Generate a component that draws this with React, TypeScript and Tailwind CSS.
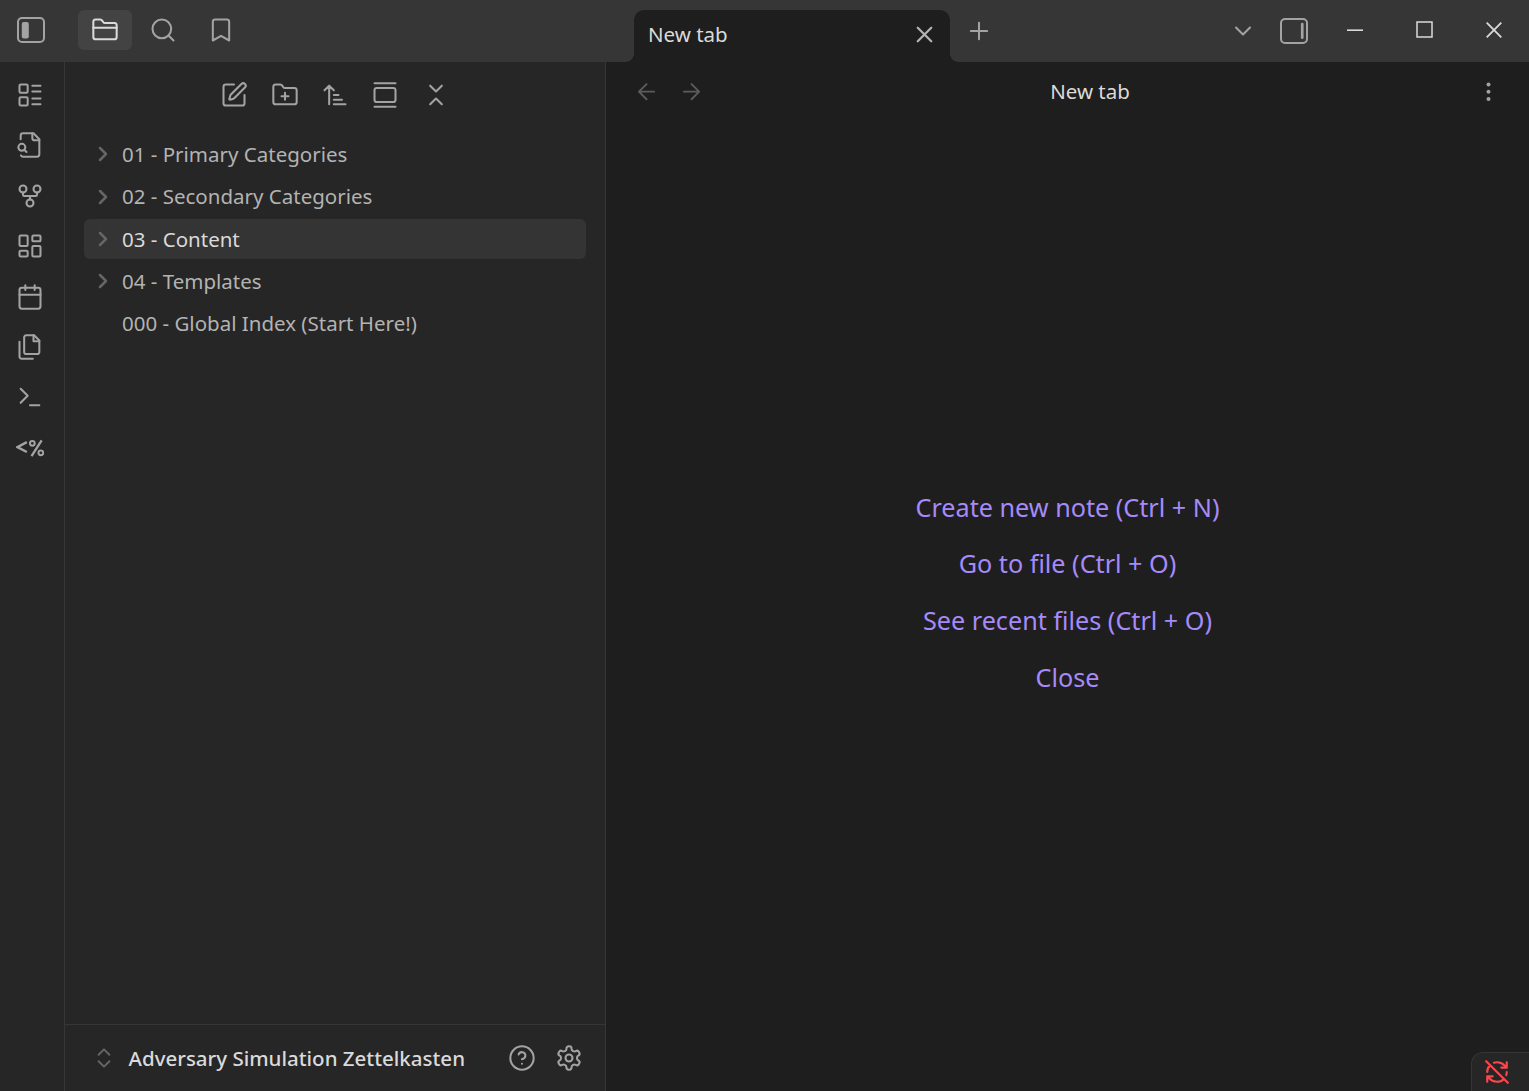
import type { ReactNode } from "react";

type IconProps = { children: ReactNode; className?: string; stroke?: number };

function Icon({ children, className = "size-7", stroke = 1.75 }: IconProps) {
  return (
    <svg
      viewBox="0 0 24 24"
      fill="none"
      stroke="currentColor"
      strokeWidth={stroke}
      strokeLinecap="round"
      strokeLinejoin="round"
      className={`shrink-0 ${className}`}
    >
      {children}
    </svg>
  );
}

const folder =
  "M20 20a2 2 0 0 0 2-2V8a2 2 0 0 0-2-2h-7.93a2 2 0 0 1-1.66-.9l-.82-1.2A2 2 0 0 0 7.93 3H4a2 2 0 0 0-2 2v13c0 1.1.9 2 2 2Z";

const ribbonIcons: ReactNode[] = [
  <>
    <rect x="3" y="3" width="7" height="7" rx="1" />
    <rect x="3" y="14" width="7" height="7" rx="1" />
    <path d="M14 4h7M14 9h7M14 15h7M14 20h7" />
  </>,
  <>
    <path d="M14 2v4a2 2 0 0 0 2 2h4" />
    <path d="M4.268 21a2 2 0 0 0 1.727 1H18a2 2 0 0 0 2-2V7l-5-5H6a2 2 0 0 0-2 2v3" />
    <path d="m9 18-1.5-1.5" />
    <circle cx="5" cy="14" r="3" />
  </>,
  <>
    <circle cx="12" cy="18" r="3" />
    <circle cx="6" cy="6" r="3" />
    <circle cx="18" cy="6" r="3" />
    <path d="M18 9v2c0 .6-.4 1-1 1H7c-.6 0-1-.4-1-1V9M12 12v3" />
  </>,
  <>
    <rect x="3" y="3" width="7" height="9" rx="1" />
    <rect x="14" y="3" width="7" height="5" rx="1" />
    <rect x="14" y="12" width="7" height="9" rx="1" />
    <rect x="3" y="16" width="7" height="5" rx="1" />
  </>,
  <>
    <path d="M8 2v4M16 2v4M3 10h18" />
    <rect x="3" y="4" width="18" height="18" rx="2" />
  </>,
  <>
    <path d="M15.5 2H8.6c-.4 0-.8.2-1.1.5-.3.3-.5.7-.5 1.1v12.8c0 .4.2.8.5 1.1.3.3.7.5 1.1.5h9.8c.4 0 .8-.2 1.1-.5.3-.3.5-.7.5-1.1V6.5L15.5 2z" />
    <path d="M3 7.6v12.8c0 .4.2.8.5 1.1.3.3.7.5 1.1.5h9.8M15 2v5h5" />
  </>,
  <path d="m4 17 6-6-6-6M12 19h8" />,
  <g strokeLinecap="butt" strokeLinejoin="miter">
    <path d="M9.3 7 1.2 11.2l8.1 4.2" strokeWidth="2.1" />
    <path d="M22 5.4 13.3 18.9" strokeWidth="2" />
    <circle cx="14" cy="8" r="2.05" strokeWidth="1.7" />
    <circle cx="21.3" cy="16.1" r="2.05" strokeWidth="1.7" />
  </g>,
];

const toolbarIcons: ReactNode[] = [
  <>
    <path d="M12 3H5a2 2 0 0 0-2 2v14a2 2 0 0 0 2 2h14a2 2 0 0 0 2-2v-7" />
    <path d="M18.375 2.625a1 1 0 0 1 3 3l-9.013 9.014a2 2 0 0 1-.853.505l-2.873.84a.5.5 0 0 1-.62-.62l.84-2.873a2 2 0 0 1 .506-.852z" />
  </>,
  <>
    <path d={folder} />
    <path d="M12 10v6M9 13h6" />
  </>,
  <path d="m3 8 4-4 4 4M7 4v16M11 12h4M11 16h7M11 20h10" />,
  <>
    <path d="M3 2h18M3 22h18" />
    <rect x="3" y="6" width="18" height="12" rx="2" />
  </>,
  <path d="m7 20 5-5 5 5M7 4l5 5 5-5" />,
];

const files = [
  { name: "01 - Primary Categories", folder: true },
  { name: "02 - Secondary Categories", folder: true },
  { name: "03 - Content", folder: true, active: true },
  { name: "04 - Templates", folder: true },
  { name: "000 - Global Index (Start Here!)", folder: false },
];

const actions = [
  "Create new note (Ctrl + N)",
  "Go to file (Ctrl + O)",
  "See recent files (Ctrl + O)",
  "Close",
];

function TitleBar() {
  return (
    <header className="flex h-[62px] shrink-0 bg-[#363636] text-[#a3a3a3]">
      <div className="flex h-[60px] w-[634px] items-center">
        <svg viewBox="0 0 28 26" className="ml-[17px] h-[26px] w-7" fill="none" stroke="currentColor">
          <rect x="1" y="1" width="26" height="24" rx="4" strokeWidth="2" />
          <rect x="4.8" y="5" width="7" height="16.6" rx="2" fill="currentColor" stroke="none" />
        </svg>
        <div className="ml-[33px] flex h-10 w-[54px] items-center justify-center rounded-md bg-[#434343] text-[#dadada]">
          <Icon>
            <path d={folder} />
            <path d="M2 10h20" />
          </Icon>
        </div>
        <Icon className="ml-[17.3px] size-7">
          <circle cx="11" cy="11" r="8" />
          <path d="m21 21-4.3-4.3" />
        </Icon>
        <Icon className="ml-[30px] size-7">
          <path d="m19 21-7-4-7 4V5a2 2 0 0 1 2-2h10a2 2 0 0 1 2 2v16z" />
        </Icon>
      </div>
      <div className="relative mt-2.5 flex h-[52px] w-[316px] items-center justify-between rounded-t-[10px] bg-[#1e1e1e] pr-3 pb-[3px] pl-3.5 text-[#dadada]">
        <div className="absolute bottom-0 -left-2 size-2 bg-[radial-gradient(circle_at_0_0,#363636_7.5px,#1e1e1e_8px)]" />
        <div className="absolute -right-2 bottom-0 size-2 bg-[radial-gradient(circle_at_100%_0,#363636_7.5px,#1e1e1e_8px)]" />
        <span>New tab</span>
        <Icon className="size-[27px] text-[#b3b3b3]" stroke={2}>
          <path d="M18 6 6 18M6 6l12 12" />
        </Icon>
      </div>
      <Icon className="mt-[17.3px] ml-[15.3px] size-7">
        <path d="M5 12h14M12 5v14" />
      </Icon>
      <div className="ml-auto flex h-[60px] items-center">
        <Icon className="mt-0.5 size-7">
          <path d="m6 9 6 6 6-6" />
        </Icon>
        <svg viewBox="0 0 28 26" className="mt-0.5 ml-[23px] h-[26px] w-7" fill="none" stroke="currentColor">
          <rect x="1" y="1" width="26" height="24" rx="4" strokeWidth="2" />
          <rect x="20.9" y="4.8" width="2.7" height="16.3" rx="1.3" fill="currentColor" stroke="none" />
        </svg>
        <svg viewBox="0 0 16 16" className="ml-[39.5px] size-4" fill="none" stroke="#dadada" strokeWidth="1.6">
          <path d="M0 8.2h16" />
        </svg>
        <svg viewBox="0 0 17 17" className="mb-px ml-[53px] size-[17px]" fill="none" stroke="#dadada" strokeWidth="1.5">
          <rect x="1" y="1" width="15" height="15" />
        </svg>
        <svg viewBox="0 0 16 16" className="mr-[27px] mb-px ml-[53px] size-4" stroke="#dadada" strokeWidth="1.8">
          <path d="m.7.7 14.6 14.6M15.3.7.7 15.3" />
        </svg>
      </div>
    </header>
  );
}

function Sidebar() {
  return (
    <aside className="flex w-[541px] shrink-0 flex-col border-r border-[#363636] bg-[#262626]">
      <div className="mt-[19px] flex justify-center gap-[22.4px] text-[#a3a3a3]">
        {toolbarIcons.map((icon, i) => (
          <Icon key={i}>{icon}</Icon>
        ))}
      </div>
      <nav className="mx-[19px] mt-[25.4px] flex flex-col gap-[2.3px] text-[#b3b3b3]">
        {files.map((file) => (
          <div
            key={file.name}
            className={`flex h-10 items-center rounded-md pl-2.5 ${file.active ? "bg-[#343434] text-[#dadada]" : ""}`}
          >
            <div className="flex w-7 items-center text-[#666666]">
              {file.folder && (
                <Icon className="size-4" stroke={3.8}>
                  <path d="m9 3 9 9-9 9" />
                </Icon>
              )}
            </div>
            <span>{file.name}</span>
          </div>
        ))}
      </nav>
      <footer className="mt-auto flex h-[67px] items-center border-t border-[#363636] pr-[22px] pl-[25.5px] text-[#a3a3a3]">
        <Icon className="size-[26px] text-[#666666]">
          <path d="m7 15 5 5 5-5M7 9l5-5 5 5" />
        </Icon>
        <span className="ml-3 grow pt-px font-medium whitespace-nowrap text-[#dadada]">
          Adversary Simulation Zettelkasten
        </span>
        <Icon>
          <circle cx="12" cy="12" r="10" />
          <path d="M9.09 9a3 3 0 0 1 5.83 1c0 2-3 3-3 3M12 17h.01" />
        </Icon>
        <Icon className="ml-[19px] size-7">
          <path d="M12.22 2h-.44a2 2 0 0 0-2 2v.18a2 2 0 0 1-1 1.73l-.43.25a2 2 0 0 1-2 0l-.15-.08a2 2 0 0 0-2.73.73l-.22.38a2 2 0 0 0 .73 2.73l.15.1a2 2 0 0 1 1 1.72v.51a2 2 0 0 1-1 1.74l-.15.09a2 2 0 0 0-.73 2.73l.22.38a2 2 0 0 0 2.73.73l.15-.08a2 2 0 0 1 2 0l.43.25a2 2 0 0 1 1 1.73V20a2 2 0 0 0 2 2h.44a2 2 0 0 0 2-2v-.18a2 2 0 0 1 1-1.73l.43-.25a2 2 0 0 1 2 0l.15.08a2 2 0 0 0 2.73-.73l.22-.39a2 2 0 0 0-.73-2.73l-.15-.08a2 2 0 0 1-1-1.74v-.5a2 2 0 0 1 1-1.74l.15-.09a2 2 0 0 0 .73-2.73l-.22-.38a2 2 0 0 0-2.73-.73l-.15.08a2 2 0 0 1-2 0l-.43-.25a2 2 0 0 1-1-1.73V4a2 2 0 0 0-2-2z" />
          <circle cx="12" cy="12" r="3" />
        </Icon>
      </footer>
    </aside>
  );
}

function EmptyTab() {
  return (
    <main className="relative flex grow flex-col bg-[#1e1e1e]">
      <div className="flex h-[59px] shrink-0 items-center text-[#5c5c5c]">
        <Icon className="ml-[27px] size-[26px]">
          <path d="m12.5 18.7-7-7 7-7M19.5 11.7h-14" />
        </Icon>
        <Icon className="ml-[19px] size-[26px]">
          <path d="M5.5 11.7h14M12.5 4.7l7 7-7 7" />
        </Icon>
        <span className="grow pr-px text-center text-[#dadada]">New tab</span>
        <svg viewBox="0 0 24 24" className="mr-7 size-6 shrink-0" fill="#a3a3a3">
          <circle cx="11.5" cy="4.5" r="2" />
          <circle cx="11.5" cy="11.7" r="2" />
          <circle cx="11.5" cy="19" r="2" />
        </svg>
      </div>
      <div className="mt-[358px] flex flex-col items-center text-[25.2px] text-[#a68af9]">
        {actions.map((label) => (
          <div key={label} className="flex h-[56.7px] items-center">
            {label}
          </div>
        ))}
      </div>
      <div className="absolute right-0 bottom-0 flex h-[39px] w-[58px] items-center rounded-tl-xl border-t border-l border-[#363636] bg-[#262626] pb-px pl-3 text-[#fb464c]">
        <Icon className="size-[26px]" stroke={2}>
          <path d="M21 8 18.74 5.74A9.75 9.75 0 0 0 12 3c-1 0-1.97.16-2.87.47M8 16H3v5M3 12c0-2.49 1-4.74 2.64-6.36M3 16l2.26 2.26A9.75 9.75 0 0 0 12 21c2.49 0 4.74-1 6.36-2.64M21 12c0 1-.16 1.97-.47 2.87M21 3v5h-5M22 22 2 2" />
        </Icon>
      </div>
    </main>
  );
}

export default function App() {
  return (
    <div className="flex h-screen w-full flex-col overflow-hidden bg-[#1e1e1e] font-['Noto_Sans',sans-serif] text-[20.5px] leading-none">
      <TitleBar />
      <div className="flex min-h-0 grow">
        <div className="flex w-[65px] shrink-0 flex-col items-center gap-[22.42px] border-r border-[#363636] bg-[#262626] pt-[19px] pr-[3.5px] text-[#a3a3a3]">
          {ribbonIcons.map((icon, i) => (
            <Icon key={i}>{icon}</Icon>
          ))}
        </div>
        <Sidebar />
        <EmptyTab />
      </div>
    </div>
  );
}
